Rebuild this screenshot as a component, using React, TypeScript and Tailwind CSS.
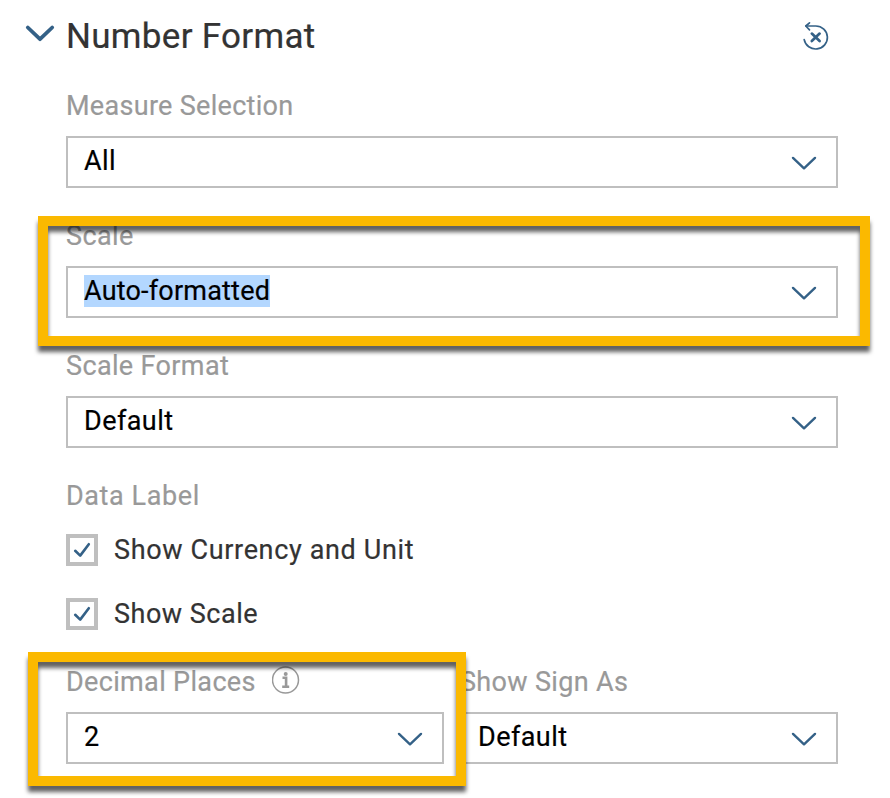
import type { ReactNode } from "react";

function Chevron() {
  return (
    <svg className="mr-[18px] mt-[2px] h-4 w-7 shrink-0" viewBox="0 0 28 16" fill="none" stroke="#346187" strokeWidth="2.4" strokeLinecap="round" strokeLinejoin="round">
      <path d="M3 2.9L14 13.3L25 2.9" />
    </svg>
  );
}

function Label({ children, className = "" }: { children: ReactNode; className?: string }) {
  return <div className={`flex h-8 items-center whitespace-nowrap text-[27px] leading-8 text-[#999999] ${className}`}>{children}</div>;
}

function Select({ children }: { children: ReactNode }) {
  return (
    <div className="flex h-[52px] items-center justify-between border-2 border-[#bfbfbf] bg-white pl-4 text-[27px] leading-8 text-black">
      <div className="-mt-[2px] whitespace-nowrap tracking-[0.43px]">{children}</div>
      <Chevron />
    </div>
  );
}

function Check({ children }: { children: ReactNode }) {
  return (
    <div className="flex h-8 items-center gap-4 whitespace-nowrap text-[27px] leading-8 text-[#333333]">
      <div className="h-8 w-8 border-4 border-[#bfbfbf]">
        <svg className="h-6 w-6" viewBox="0 0 24 24" fill="none" stroke="#346187" strokeWidth="2.6" strokeLinecap="round" strokeLinejoin="round">
          <path d="M5.2 12.8L10.2 17.6L18.8 6.2" />
        </svg>
      </div>
      {children}
    </div>
  );
}

export default function App() {
  return (
    <div className="relative h-[798px] w-[890px] overflow-hidden bg-white font-[Roboto,sans-serif] [-webkit-text-stroke:0.2px_currentColor]">
      <div className="flex h-[72px] items-center pl-[25px] pr-[60px]">
        <svg className="-mt-[5px] mr-[11px] h-5 w-[30px]" viewBox="0 0 30 20" fill="none" stroke="#346187" strokeWidth="3.8" strokeLinecap="round" strokeLinejoin="round">
          <path d="M2.8 3.5L15 15.2L27.2 3.5" />
        </svg>
        <h1 className="mt-[2px] flex-1 text-[35px] leading-10 tracking-[0.3px] text-[#333333]">Number Format</h1>
        <svg className="h-[30px] w-[28px]" viewBox="0 0 28 30" fill="none" stroke="#346187" strokeWidth="1.7" strokeLinecap="round" strokeLinejoin="round">
          <path d="M2.2 18.6A11.7 11.5 0 1 0 13.8 5H4" />
          <path d="M7.5 1.8L3.8 5L7.5 8.8" />
          <path d="M9.8 12.6L17.6 20M17.6 12.6L9.8 20" strokeWidth="2.7" />
        </svg>
      </div>
      <div className="flex w-[838px] flex-col pl-[66px] pt-[18px]">
        <Label><span className="tracking-[0.3px]">Measure Selection</span></Label>
        <div className="mt-[14px]"><Select>All</Select></div>
        <Label className="mt-8"><span className="tracking-[0.4px]">Scale</span></Label>
        <div className="mt-[14px]"><Select><span className="inline-block bg-[#b3d7ff] tracking-[0.2px]">Auto-formatted</span></Select></div>
        <Label className="mt-8"><span className="tracking-[0.36px]">Scale Format</span></Label>
        <div className="mt-[14px]"><Select>Default</Select></div>
        <Label className="mt-8"><span className="tracking-[0.6px]">Data Label</span></Label>
        <div className="mt-[22px] flex flex-col gap-8">
          <Check><span className="tracking-[0.65px]">Show Currency and Unit</span></Check>
          <Check><span className="tracking-[0.5px]">Show Scale</span></Check>
        </div>
        <div className="mt-[36px] grid grid-cols-2 gap-4">
          <div>
            <Label>
              <span className="tracking-[0.34px]">Decimal Places</span>
              <svg className="ml-auto mr-[144px] -mt-[4px] h-7 w-7" viewBox="0 0 28 28" fill="none" stroke="#999999">
                <circle cx="13.5" cy="14" r="13" strokeWidth="1.5" />
                <path d="M10.5 11.8H14.1V20.5M10.2 20.8H17.2" strokeWidth="2.6" />
                <circle cx="13.7" cy="7.9" r="2" fill="#999999" stroke="none" />
              </svg>
            </Label>
            <div className="mt-[14px]"><Select>2</Select></div>
          </div>
          <div>
            <Label><span className="tracking-[0.34px]">Show Sign As</span></Label>
            <div className="mt-[14px]"><Select>Default</Select></div>
          </div>
        </div>
      </div>
      <div className="pointer-events-none absolute left-[38px] top-[216px] h-[130px] w-[832px] border-[10px] border-[#fbb900] drop-shadow-[0_6px_2px_rgba(0,0,0,0.62)]" />
      <div className="pointer-events-none absolute left-[28px] top-[652px] h-[134px] w-[438px] border-[10px] border-[#fbb900] drop-shadow-[0_6px_2px_rgba(0,0,0,0.62)]" />
    </div>
  );
}
